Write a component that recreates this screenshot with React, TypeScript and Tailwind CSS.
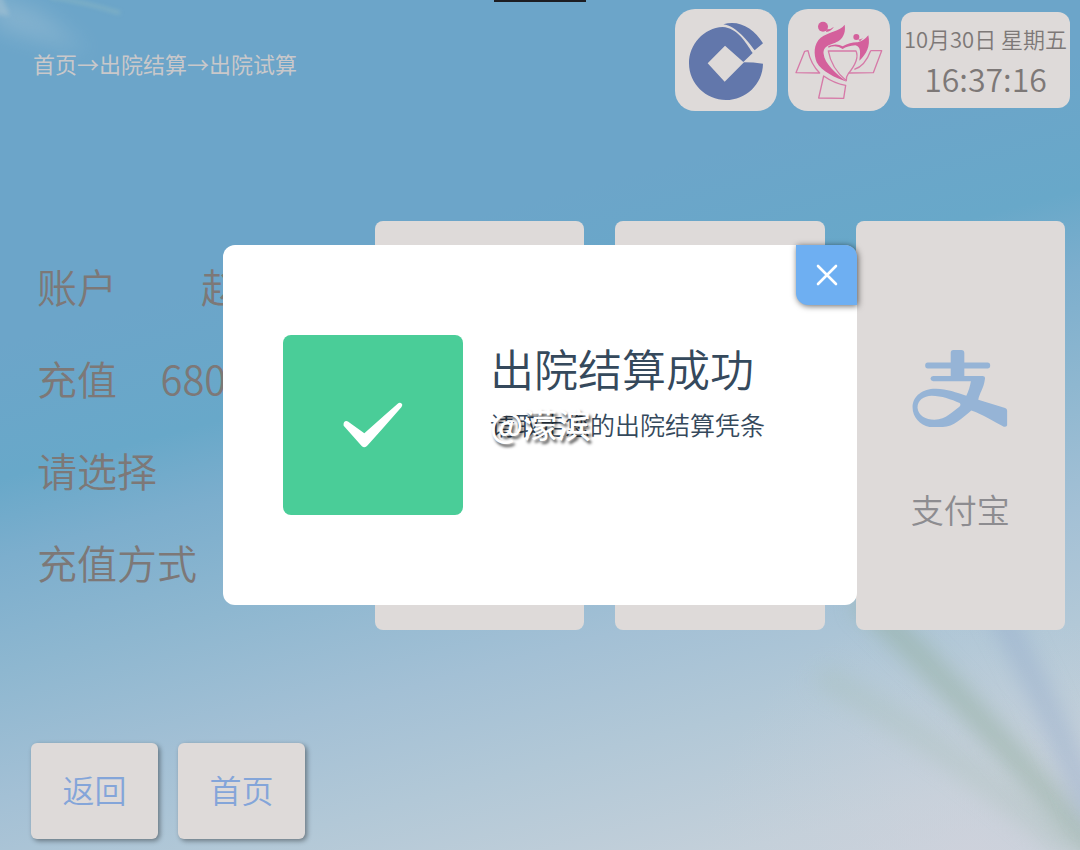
import React from 'react';

const ACCOUNT_ROWS = [
  { label: '账户', value: '赵某某' },
  { label: '充值', value: '680.00元' },
  { label: '请选择', value: '' },
  { label: '充值方式', value: '' },
];

const Backdrop: React.FC = () => (
  <svg
    aria-hidden="true"
    viewBox="0 0 1080 850"
    preserveAspectRatio="none"
    className="absolute inset-0 w-full h-full"
  >
    <defs>
      <filter id="soft" x="-50%" y="-50%" width="200%" height="200%">
        <feGaussianBlur stdDeviation="11" />
      </filter>
      <filter id="fine" x="-50%" y="-50%" width="200%" height="200%">
        <feGaussianBlur stdDeviation="2" />
      </filter>
      <radialGradient id="corner" cx="970" cy="870" r="270" gradientUnits="userSpaceOnUse">
        <stop offset="0" stopColor="#d2d2dc" stopOpacity="0.6" />
        <stop offset="1" stopColor="#c4d0da" stopOpacity="0" />
      </radialGradient>
    </defs>
    <rect width="1080" height="850" fill="url(#corner)" />
    <path d="M-20 -10 L0 30 L90 52 L40 12Z" fill="#a9c6d8" opacity="0.4" filter="url(#soft)" />
    <path d="M-8 -8 L-8 14 L10 16 L0 -8Z" fill="#b4cad6" opacity="0.4" filter="url(#fine)" />
    <path d="M50 -3 Q85 2 120 13" fill="none" stroke="#98bfc0" strokeWidth="3" opacity="0.5" filter="url(#fine)" />
    <path d="M860 598 Q960 690 1100 856" fill="none" stroke="#93ae9f" strokeWidth="22" opacity="0.6" filter="url(#soft)" />
    <path d="M975 570 Q1040 680 1095 820" fill="none" stroke="#94abca" strokeWidth="20" opacity="0.55" filter="url(#soft)" />
    <path d="M820 675 Q940 740 1070 850" fill="none" stroke="#a6bdb4" strokeWidth="22" opacity="0.35" filter="url(#soft)" />
  </svg>
);

const BankLogo: React.FC = () => (
  <svg viewBox="45 27 306 306" className="w-full h-full" role="img" aria-label="中国建设银行">
    <g fill="#6277ab">
      <path d="M188 81 C131 84 87 133 87 190 C87 251 137 300 198 300 C257 300 308 253 309 191 Q280 187 252 187 L194 245 L143 190 L195 137 L250 186 L278 159 C257 127 232 84 188 81Z" />
      <path d="M190 73 C235 58 282 84 309 130 L284 151 C263 123 230 79 190 73Z" />
    </g>
  </svg>
);

const HospitalLogo: React.FC = () => (
  <svg viewBox="384 27 306 306" className="w-full h-full" role="img" aria-label="医院">
    <g fill="#d4609c">
      <circle cx="489" cy="80" r="15" />
      <path d="M500 88 Q511 89 522 80 Q513 94 498 96Z" />
      <path d="M554 74 C540 94 505 95 482 113 C460 132 461 163 470 187 C484 213 525 234 560 245 C529 222 493 190 491 162 C488 133 519 134 537 122 C553 110 557 92 554 74Z" />
      <path d="M505 138 Q530 128 548 139 Q572 126 593 127 Q612 122 625 106 C632 139 619 163 598 182 C601 160 604 140 586 136 Q562 138 548 147 Q529 133 505 143Z" />
      <circle cx="589" cy="111" r="9" />
      <path d="M594 118 Q603 119 609 114 L600 124Z" />
    </g>
    <g fill="none" stroke="#d67aa8" strokeWidth="4" strokeLinejoin="round">
      <path d="M444 152 L434 154 L408 218 L479 219 Q452 192 444 152Z" />
      <path d="M505 153 L588 153 Q600 178 565 221 Q557 232 559 242 Q514 205 505 153Z" />
      <path d="M632 152 L665 152 L640 218 L566 219 M583 208 Q615 198 632 152" />
      <path d="M491 228 L476 294 L551 295 L557 256 Q522 250 491 228Z" />
    </g>
  </svg>
);

const AlipayIcon: React.FC = () => (
  <svg viewBox="98 60 288 232" className="w-24 h-[77px]" aria-hidden="true">
    <path
      fill="#96b4d6"
      fillRule="evenodd"
      d="M222 60 H246 Q255 60 255 69 V98 H325 Q333 98 333 107 Q333 116 325 116 H255 V138 H310 Q319 138 317 148 C314 174 301 189 297 210 L378 235 Q384 237 384 243 V287 Q383 293 374 291 C346 276 310 253 276 242 C248 265 223 291 190 292 H150 C121 286 99 263 99 232 C100 197 132 176 170 177 C203 177 231 189 261 198 C268 183 272 170 275 154 H161 Q153 153 153 146 Q154 138 161 138 H214 V116 H145 Q137 116 137 107 Q137 98 145 98 H214 V69 Q214 60 222 60Z M241 220 C216 209 186 198 157 198 C132 199 114 212 114 234 C116 258 139 270 165 270 C202 269 219 245 240 231 Q246 225 241 220Z"
    />
  </svg>
);

const Header: React.FC = () => (
  <header className="flex justify-between items-start pl-[33px] pr-[10px] pt-[9px]">
    <nav aria-label="当前位置" className="pt-10 text-[22px] leading-7 font-normal text-[#c9c8ca]">
      首页→出院结算→出院试算
    </nav>
    <div className="flex items-center gap-[11px]">
      <div className="w-[102px] h-[102px] rounded-[20px] bg-[#dedad9] overflow-hidden">
        <BankLogo />
      </div>
      <div className="w-[102px] h-[102px] rounded-[20px] bg-[#dedad9] overflow-hidden">
        <HospitalLogo />
      </div>
      <div className="w-[169px] h-24 rounded-xl bg-[#dedad9] text-[#7d7877] text-center whitespace-nowrap flex flex-col justify-center">
        <div className="text-[22px] leading-9">10月30日 星期五</div>
        <div className="text-[32px] leading-[44px]">16:37:16</div>
      </div>
    </div>
  </header>
);

const SuccessDialog: React.FC = () => (
  <div className="fixed inset-0 flex items-center justify-center">
    <div
      role="dialog"
      aria-modal="true"
      aria-labelledby="dialog-title"
      className="relative w-full max-w-[634px] min-h-[360px] flex items-center gap-[27px] px-[60px] rounded-xl bg-white"
    >
      <div className="w-[180px] h-[180px] shrink-0 rounded-lg bg-[#4acd98] flex items-center justify-center">
        <svg viewBox="222 248 180 138" className="w-[60px] h-[46px]" aria-hidden="true">
          <path
            fill="#fff"
            d="M224 319 Q222 306 232 305 Q237 305 242 310 L286 342 L386 253 Q393 247 399 254 Q401 259 397 264 L296 378 Q287 388 278 380Z"
          />
        </svg>
      </div>
      <div className="relative h-[180px] text-[#35495c] whitespace-nowrap">
        <h1 id="dialog-title" className="text-[44px] leading-[66px]">出院结算成功</h1>
        <p className="text-[25px] leading-[46px]">请取走您的出院结算凭条</p>
        <span className="absolute left-0 top-[66px] text-[34px] leading-[46px] font-medium text-white [text-shadow:2px_3px_3px_#000a]">
          @濛滨
        </span>
      </div>
      <button
        type="button"
        aria-label="关闭"
        className="absolute right-0 top-0 w-[61px] h-[60px] rounded-tr-xl rounded-bl-xl bg-[#6eaff2] shadow-[1px_1px_6px_#0009] flex items-center justify-center"
      >
        <svg viewBox="0 0 22 22" className="w-[22px] h-[22px]" aria-hidden="true">
          <path d="M2 2 L20 20 M20 2 L2 20" stroke="#fff" strokeWidth="2.6" strokeLinecap="round" />
        </svg>
      </button>
    </div>
  </div>
);

const App: React.FC = () => {
  return (
    <div className="relative min-h-screen overflow-hidden font-['Noto_Sans_CJK_SC',sans-serif] font-[350] bg-[linear-gradient(165deg,#6ca5c9_0%,#6ca5c9_30%,#68a8c9_42%,#7caecd_49%,#8eb7d0_59%,#a3c0d5_70%,#b2c8d7_80%,#c4d0da_92%,#cad2dc_100%)]">
      <Backdrop />
      <div className="absolute top-0 left-1/2 -translate-x-1/2 w-[92px] h-0.5 bg-[#1d1d22]" />

      <div className="relative min-h-screen flex flex-col">
        <Header />

        <main className="mt-[110px] pl-[37px] pr-[15px] flex">
          <div className="w-[338px] shrink-0 pt-[19px] text-[40px] leading-[92px] text-[#7d7877] whitespace-nowrap">
            {ACCOUNT_ROWS.map((row) => (
              <div key={row.label} className="w-[284px] flex justify-between">
                <span>{row.label}</span>
                <span>{row.value}</span>
              </div>
            ))}
          </div>

          {/* Payment methods */}
          <div className="flex-1 grid grid-cols-3 gap-[31px]">
            <button type="button" aria-label="银行卡" className="h-[409px] rounded-lg bg-[#dedad9]" />
            <button type="button" aria-label="微信" className="h-[409px] rounded-lg bg-[#dedad9]" />
            <button
              type="button"
              className="h-[409px] pt-8 rounded-lg bg-[#dedad9] flex flex-col items-center justify-center gap-[58px]"
            >
              <AlipayIcon />
              <span className="text-[33px] leading-[48px] text-[#8d8c90]">支付宝</span>
            </button>
          </div>
        </main>

        <footer className="mt-auto pt-8 pb-[11px] pl-[31px] flex gap-5 text-[32px] leading-[44px] text-[#84a5d9]">
          <button type="button" className="w-[127px] h-24 pb-1 rounded-md bg-[#dedad9] shadow-[2px_2px_5px_#0006]">
            返回
          </button>
          <button type="button" className="w-[127px] h-24 pb-1 rounded-md bg-[#dedad9] shadow-[2px_2px_5px_#0006]">
            首页
          </button>
        </footer>
      </div>

      <SuccessDialog />
    </div>
  );
};

export default App;
